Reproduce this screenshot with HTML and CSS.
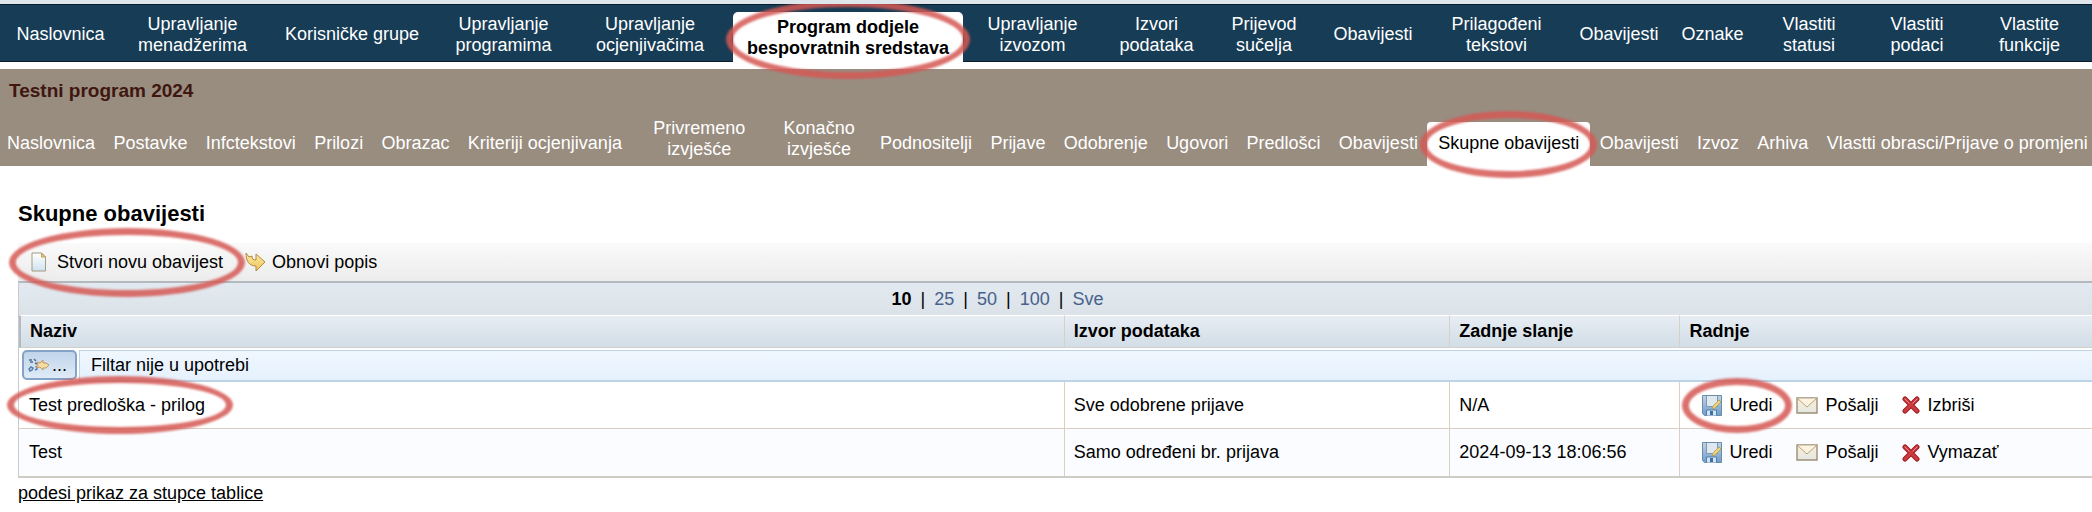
FILE: index.html
```
<!DOCTYPE html>
<html lang="hr">
  <head>
    <meta charset="utf-8">
    <title>Skupne obavijesti</title>
    <link rel="stylesheet" href="styles.css">
  </head>
<body>
  <!-- icons used more than once -->
  <svg class="defs" width="0" height="0" aria-hidden="true">
    <defs>
      <linearGradient id="g-disk" x1="0" y1="0" x2="0" y2="1">
        <stop offset="0" stop-color="#c3d3e2"/><stop offset="1" stop-color="#6f9ccb"/>
      </linearGradient>
      <linearGradient id="g-mail" x1="0" y1="0" x2="0" y2="1">
        <stop offset="0" stop-color="#fbeed6"/><stop offset="1" stop-color="#e3e8e4"/>
      </linearGradient>
      <linearGradient id="g-page" x1="0" y1="0" x2="0" y2="1">
        <stop offset="0" stop-color="#ffffff"/><stop offset="1" stop-color="#cfe3f0"/>
      </linearGradient>
      <linearGradient id="g-gold" x1="0" y1="0" x2="0" y2="1">
        <stop offset="0" stop-color="#fbeaa8"/><stop offset="1" stop-color="#efc457"/>
      </linearGradient>
    </defs>
    <symbol id="i-disk" viewBox="0 0 20 21">
      <path d="M.5 .5h19v20H2.500l-2-2z" fill="url(#g-disk)" stroke="#6a8cab"/>
      <path d="M4.500 1v10.500h11V1" fill="#dfe8ee" stroke="#7c99b3"/>
      <path d="M4.500 20.500v-5.500h10v5.500" fill="#d5e4f2" stroke="#4f7fb0"/>
      <path d="M8 16h3v4H8z" fill="#3f6fa3"/>
      <path d="M10 14l1-3 6-6 2 2-6 6z" fill="#ecd47c" stroke="#b39a55" stroke-width=".8"/>
    </symbol>
    <symbol id="i-mail" viewBox="0 0 22 17">
      <path d="M1 1h20v15H1z" fill="url(#g-mail)" stroke="#9c8f76" stroke-width="1.400"/>
      <path d="M1.500 1.500L11 10l9.500-8.500" fill="#fdf3df" stroke="#b5a37e"/>
    </symbol>
    <symbol id="i-delete" viewBox="0 0 18 18">
      <path d="M3 3l12 12M15 3L3 15" stroke="#9c1c20" stroke-width="5" stroke-linecap="round"/>
      <path d="M3 3l12 12M15 3L3 15" stroke="#cf3a40" stroke-width="3" stroke-linecap="round"/>
      <path d="M3 3l4 4M15 3l-4 4" stroke="#e88a8c" stroke-width="1" stroke-linecap="round"/>
    </symbol>
  </svg>

  <nav class="main-nav">
    <a href="#">Naslovnica</a>
    <a href="#">Upravljanje<br>menadžerima</a>
    <a href="#">Korisničke grupe</a>
    <a href="#">Upravljanje<br>programima</a>
    <a href="#">Upravljanje<br>ocjenjivačima</a>
    <a href="#" class="active marked">Program dodjele<br>bespovratnih sredstava</a>
    <a href="#">Upravljanje<br>izvozom</a>
    <a href="#">Izvori<br>podataka</a>
    <a href="#">Prijevod<br>sučelja</a>
    <a href="#">Obavijesti</a>
    <a href="#">Prilagođeni<br>tekstovi</a>
    <a href="#">Obavijesti</a>
    <a href="#">Oznake</a>
    <a href="#">Vlastiti<br>statusi</a>
    <a href="#">Vlastiti<br>podaci</a>
    <a href="#">Vlastite<br>funkcije</a>
  </nav>

  <div class="program">
    <div class="program-name">Testni program 2024</div>
    <nav class="sub-nav">
      <a href="#">Naslovnica</a>
      <a href="#">Postavke</a>
      <a href="#">Infctekstovi</a>
      <a href="#">Prilozi</a>
      <a href="#">Obrazac</a>
      <a href="#">Kriteriji ocjenjivanja</a>
      <a href="#" class="two-line wide">Privremeno<br>izvješće</a>
      <a href="#" class="two-line">Konačno<br>izvješće</a>
      <a href="#">Podnositelji</a>
      <a href="#">Prijave</a>
      <a href="#">Odobrenje</a>
      <a href="#">Ugovori</a>
      <a href="#">Predlošci</a>
      <a href="#">Obavijesti</a>
      <a href="#" class="active marked">Skupne obavijesti</a>
      <a href="#">Obavijesti</a>
      <a href="#">Izvoz</a>
      <a href="#">Arhiva</a>
      <a href="#">Vlastti obrasci/Prijave o promjeni</a>
    </nav>
  </div>

  <main>
    <h1>Skupne obavijesti</h1>

    <div class="toolbar">
      <button type="button" class="new marked">
        <svg width="16" height="20" viewBox="0 0 16 20">
          <path d="M1 1h9.500l4 4v14H1z" fill="url(#g-page)" stroke="#a59a80"/>
          <path d="M10.500 1v4h4z" fill="#f0cf83" stroke="#bd9c55"/>
        </svg>
        Stvori novu obavijest
      </button>
      <button type="button" class="refresh">
        <svg width="21" height="20" viewBox="0 0 21 20">
          <path d="M1 1c0 8 3 13 10 13v5l9-9-9-8v6c-3 0-4-1-4-4L4 5z" fill="url(#g-gold)" stroke="#b08a3e" stroke-linejoin="round"/>
        </svg>
        Obnovi popis
      </button>
    </div>

    <div class="grid">
      <div class="pager">
        <b>10</b><span>|</span><a href="#">25</a><span>|</span><a href="#">50</a><span>|</span><a href="#">100</a><span>|</span><a href="#">Sve</a>
      </div>
      <table>
        <thead>
          <tr>
            <th class="col-name">Naziv</th>
            <th class="col-source">Izvor podataka</th>
            <th class="col-sent">Zadnje slanje</th>
            <th>Radnje</th>
          </tr>
        </thead>
        <tbody>
          <tr class="filter">
            <td colspan="4">
              <div class="filter-row">
                <button type="button" aria-label="Filtar">
                  <svg width="22" height="16" viewBox="0 0 22 16" fill="none">
                    <path d="M1 3h3M2 5h3M6 2l2 2M7 6l2 1" stroke="#53708f" stroke-width="1.500"/>
                    <path d="M1 12l2-2 2 1-1 2-2 1zM7 13l2-1-1-3" stroke="#5580ad" stroke-width="1.500"/>
                    <path d="M9 5l3 1 3-3v3h3l3 2-3 3h-3v2l-3-3-4 1 2-3z" fill="#f4dca2" stroke="#bd9660"/>
                  </svg>
                  ...
                </button>
                <span>Filtar nije u upotrebi</span>
              </div>
            </td>
          </tr>
          <tr>
            <td><span class="name marked">Test predloška - prilog</span></td>
            <td>Sve odobrene prijave</td>
            <td>N/A</td>
            <td>
              <div class="actions">
                <a href="#" class="marked"><svg width="20" height="21"><use href="#i-disk"/></svg>Uredi</a>
                <a href="#"><svg width="22" height="17"><use href="#i-mail"/></svg>Pošalji</a>
                <a href="#"><svg width="18" height="18"><use href="#i-delete"/></svg>Izbriši</a>
              </div>
            </td>
          </tr>
          <tr class="even">
            <td><span class="name">Test</span></td>
            <td>Samo određeni br. prijava</td>
            <td>2024-09-13 18:06:56</td>
            <td>
              <div class="actions">
                <a href="#"><svg width="20" height="21"><use href="#i-disk"/></svg>Uredi</a>
                <a href="#"><svg width="22" height="17"><use href="#i-mail"/></svg>Pošalji</a>
                <a href="#"><svg width="18" height="18"><use href="#i-delete"/></svg>Vymazať</a>
              </div>
            </td>
          </tr>
        </tbody>
      </table>
    </div>

    <a href="#" class="columns-link">podesi prikaz za stupce tablice</a>
  </main>
</body>
</html>
```
FILE: styles.css
```
* {
  box-sizing: border-box;
}
body {
  margin: 0;
  border-top: 4px solid #dfe6eb;
  background: #fff;
  color: #000;
  font: 18px/21px "Liberation Sans", Arial, sans-serif;
  overflow-x: hidden;
}
a {
  color: inherit;
  text-decoration: none;
}
button {
  padding: 0;
  border: 0;
  background: none;
  color: inherit;
  font: inherit;
}
svg {
  flex: none;
}
.defs {
  position: absolute;
}

/* red rings around the things to click */
.marked {
  position: relative;
}
.marked::after {
  content: "";
  position: absolute;
  z-index: 1;
  border: 7px solid rgba(213, 88, 84, 0.85);
  border-radius: 50%;
  filter: blur(1px);
  pointer-events: none;
}

/* top menu */
.main-nav {
  display: grid;
  grid-template-columns: 121fr 143fr 176fr 127fr 166fr 230fr 139fr 109fr 106fr 112fr 135fr 110fr 77fr 116fr 100fr 125fr;
  align-items: center;
  height: 58px;
  padding-top: 3px;
  border-top: 1px solid #0a1c2b;
  border-bottom: 1px solid #0a1c2b;
  background: #173c55;
  color: #fff;
  text-align: center;
  white-space: nowrap;
}
.main-nav .active {
  align-self: end;
  height: 50px;
  margin-bottom: -1px;
  padding-top: 5px;
  border-radius: 5px 5px 0 0;
  background: #fff;
  color: #000;
  font-weight: bold;
}
.main-nav .marked::after {
  inset: -12px -7px -17px;
}

/* program menu */
.program {
  margin-top: 7px;
  padding-top: 11px;
  background: #998d80;
}
.program-name {
  padding-left: 9px;
  color: #401610;
  font-size: 19px;
  font-weight: bold;
}
.sub-nav {
  display: flex;
  justify-content: space-between;
  align-items: flex-end;
  height: 65px;
  color: #fff;
  text-align: center;
  white-space: nowrap;
}
.sub-nav a {
  padding: 0 9px 12px;
}
.sub-nav a:first-child {
  padding-left: 7px;
}
.sub-nav a:last-child {
  padding-right: 4px;
}
.sub-nav .two-line {
  padding: 0 16px 6px;
}
.sub-nav .wide {
  padding: 0 22px 6px;
}
.sub-nav .active {
  padding: 11px 11px 12px;
  border-radius: 4px 4px 0 0;
  background: #fff;
  color: #000;
}
.sub-nav .marked::after {
  inset: -11px -7px -12px;
}

main {
  padding: 36px 0 0 18px;
}
h1 {
  margin: 0 0 17px;
  font-size: 22px;
  line-height: 24px;
}
.toolbar {
  display: flex;
  align-items: center;
  height: 38px;
  padding-left: 13px;
  background: linear-gradient(#fafafa, #ececec);
}
.toolbar button {
  display: flex;
  align-items: center;
}
.toolbar .new {
  gap: 10px;
  margin-right: 22px;
}
.toolbar .refresh {
  gap: 6px;
}
.toolbar .marked::after {
  inset: -24px -22px;
}

/* list */
.grid {
  border-top: 2px solid #b3babf;
  border-left: 1px solid #c6cbd0;
  border-bottom: 2px solid #cfccc6;
}
.pager {
  display: flex;
  justify-content: center;
  gap: 9px;
  padding: 6px 116px 5px 0;
  background: linear-gradient(#e2e9f0, #dbe2e8);
}
.pager a {
  color: #46618c;
}
table {
  width: 100%;
  border-collapse: separate;
  border-spacing: 0;
  table-layout: fixed;
}
.col-name {
  width: 50.4%;
}
.col-source {
  width: 18.6%;
}
.col-sent {
  width: 11.1%;
}
th {
  height: 33px;
  padding: 0 9px;
  border-top: 1px solid #fff;
  border-left: 1px solid #d5d0c8;
  border-bottom: 1px solid #cfcfcb;
  background: linear-gradient(#e7edf3, #d2dde6);
  text-align: left;
}
th:first-child {
  border-left: 2px solid #b4bac0;
}
td {
  height: 47px;
  padding: 0 9px;
  border-left: 1px solid #dccfc1;
  border-bottom: 1px solid #d6cfc2;
}
td:first-child {
  border-left: 0;
}
tr:last-child td {
  border-bottom: 0;
}
.even td {
  background: #fafcff;
}
.filter td {
  height: 34px;
  padding: 2px 0 0 3px;
  border: 0;
}
.filter-row {
  display: flex;
  gap: 2px;
}
.filter-row button {
  display: flex;
  align-items: center;
  gap: 2px;
  width: 55px;
  height: 30px;
  padding-left: 4px;
  border: 2px solid #85a3c6;
  border-radius: 5px;
  background: linear-gradient(#c0d4ea, #dfebf7);
}
.filter-row span {
  flex: 1;
  height: 32px;
  padding: 4px 11px;
  border: 1px solid #bcd4e6;
  border-width: 1px 0 2px 1px;
  background: linear-gradient(#f0f7ff, #e5f1fd);
}
td .name {
  margin-left: 1px;
}
.name.marked::after {
  inset: -19px -28px -19px -22px;
}
.actions {
  display: flex;
  gap: 24px;
  padding-left: 13px;
}
.actions a {
  display: flex;
  align-items: center;
  gap: 7px;
}
.actions .marked::after {
  inset: -17px -20px;
}

.columns-link {
  display: inline-block;
  margin-top: 5px;
  text-decoration: underline;
}
```
